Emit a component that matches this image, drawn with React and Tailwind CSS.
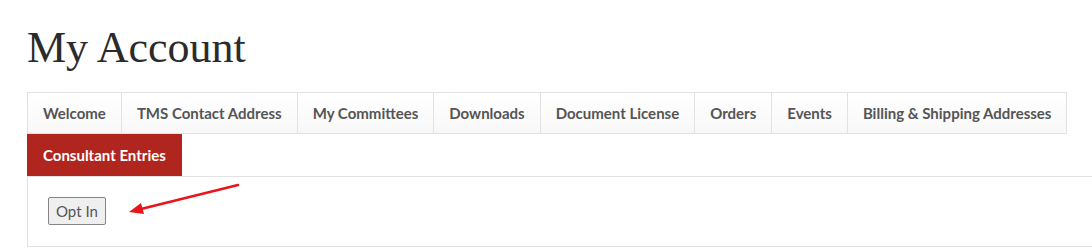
const tabs = [
  "Welcome",
  "TMS Contact Address",
  "My Committees",
  "Downloads",
  "Document License",
  "Orders",
  "Events",
  "Billing & Shipping Addresses",
];

export default function App() {
  return (
    <div className="w-full h-[248px] overflow-hidden bg-white">
      <div className="w-[1100px] pl-[27px]">
        <h1 className="pt-[26px] text-[44px] leading-none text-[#2b2b2b] font-['Liberation_Serif',serif]">
          My Account
        </h1>

        {/* tabs */}
        <ul className="mt-[22px] flex flex-wrap w-[1045px] font-['Lato',sans-serif] text-[15px] font-bold">
          {tabs.map((t, i) => (
            <li
              key={t}
              className={
                "h-[42px] flex items-center px-[15px] border-t border-b border-l border-[#e2e2e2] bg-gradient-to-b from-white to-[#f8f8f8] text-[#555] " +
                (i === tabs.length - 1 ? "border-r" : "")
              }
            >
              {t}
            </li>
          ))}
          <li className="h-[42px] flex items-center px-[16px] bg-[#b0261e] text-white">
            Consultant Entries
          </li>
        </ul>

        {/* panel */}
        <div className="relative h-[71px] border border-[#e2e2e2] pt-[20px] pl-[20px]">
          <button className="h-[28px] px-[7px] rounded-[2px] border border-[#858585] bg-[#efefef] text-[15px] text-[#555] font-['Lato',sans-serif]">
            Opt In
          </button>
          <svg
            className="absolute left-[94px] top-[1px]"
            width="150"
            height="40"
            viewBox="0 0 150 40"
          >
            <line
              x1="116"
              y1="7"
              x2="19"
              y2="31"
              stroke="#e8161b"
              strokeWidth="2.5"
              strokeLinecap="round"
            />
            <polygon points="7,34 22,36 19,25" fill="#e8161b" />
          </svg>
        </div>
      </div>
    </div>
  );
}
